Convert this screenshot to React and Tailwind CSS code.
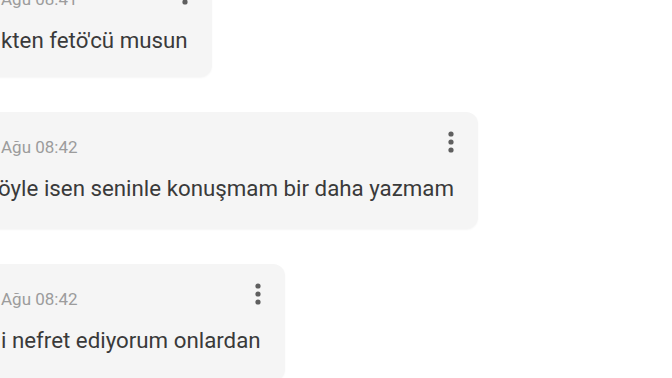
import React from "react";

function Dots() {
  return (
    <svg width="6" height="22" viewBox="0 0 6 22" className="shrink-0">
      <circle cx="3" cy="3" r="2.6" fill="#5f5f5f" />
      <circle cx="3" cy="11" r="2.6" fill="#5f5f5f" />
      <circle cx="3" cy="19" r="2.6" fill="#5f5f5f" />
    </svg>
  );
}

function Bubble({ time, text, textShift = "", pb = "pb-[27px]", mt = "" }) {
  return (
    <div className={`w-fit -ml-[20px] pl-[21px] pr-[24px] pt-[19px] ${pb} ${mt} rounded-[12px] bg-[#f5f5f5] shadow-[0_1px_2px_rgba(0,0,0,0.04)]`}>
      <div className="flex items-start justify-between">
        <span className="mt-[6px] text-[17px] leading-[20px] text-[#9c9c9c]">{time}</span>
        <Dots />
      </div>
      <div className={`mt-[17px] whitespace-nowrap text-[22.3px] leading-[28px] text-[#3a3a3a] ${textShift}`}>{text}</div>
    </div>
  );
}

export default function App() {
  return (
    <div className="w-[672px] h-[378px] overflow-hidden bg-white" style={{ fontFamily: "Roboto, 'Noto Sans', sans-serif" }}>
      <div className="flex flex-col gap-[35px]">
        <Bubble mt="-mt-[36px]" pb="pb-[23px]" time="Ağu 08:41" text="kten fetö'cü musun" />
        <Bubble time="Ağu 08:42" text="öyle isen seninle konuşmam bir daha yazmam" textShift="-ml-[3px]" />
        <Bubble time="Ağu 08:42" text="i nefret ediyorum onlardan" />
      </div>
    </div>
  );
}
